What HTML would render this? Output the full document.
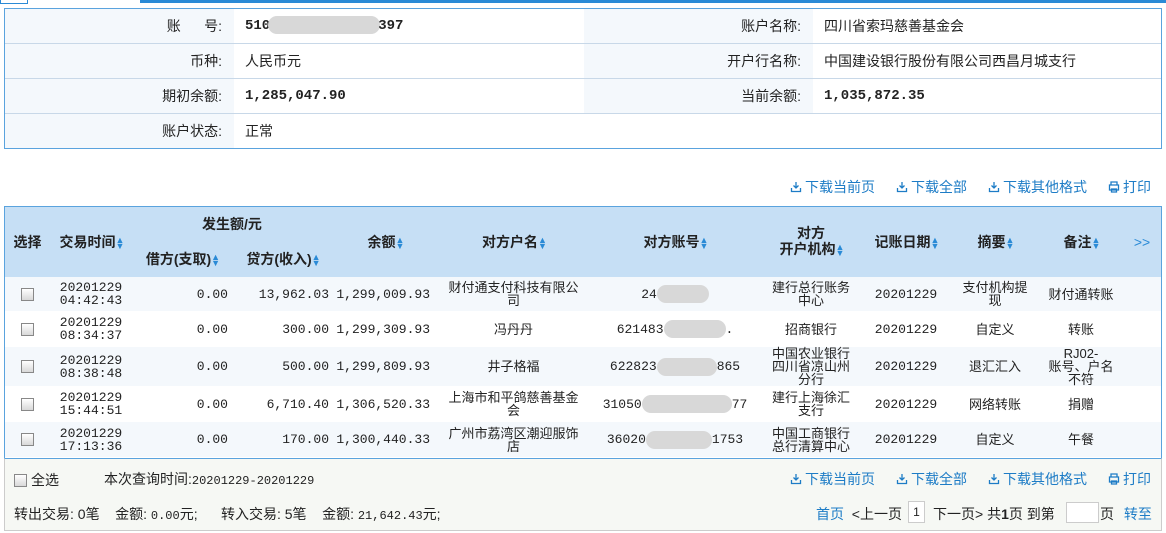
<!DOCTYPE html>
<html><head><meta charset="utf-8"><style>
*{margin:0;padding:0;box-sizing:border-box}
body{width:1166px;height:533px;background:#fff;font-family:"Liberation Sans","WenQuanYi Zen Hei","Noto Sans CJK SC",sans-serif;font-size:13px;color:#222;position:relative;overflow:hidden}
.a{position:absolute}
.num{font-family:"Liberation Mono",monospace;font-size:12px}
.nb{font-family:"Liberation Mono",monospace;font-size:13px;font-weight:bold}
.info{left:4px;top:8px;width:1158px;height:141px;border:1px solid #5aa3de}
.info .r{position:absolute;left:0;width:1156px;height:35px;border-bottom:1px solid #c8d8e8}
.lb{position:absolute;top:0;height:34px;background:#f4f8fc;text-align:right;line-height:34px;padding-right:12px;font-size:14px}
.vl{position:absolute;top:0;line-height:34px;font-size:14px}
.links{color:#1d7cc6;font-size:14px}
.links span{position:absolute;white-space:nowrap;display:flex;align-items:center}
.links svg{margin-right:3px}
.th{position:absolute;font-weight:bold;font-size:14px;text-align:center;color:#222;line-height:18px}
.ar{color:#2a8ad6;font-size:9px;display:inline-block;width:7px;line-height:6px;vertical-align:middle;text-align:center}
.row{position:absolute;left:5px;width:1156px;border-bottom:1px solid #fff}
.c{position:absolute;top:0;height:100%;display:flex;align-items:center;justify-content:center;text-align:center;line-height:13px;font-size:13px}
.rt{justify-content:flex-end}
.cb{width:13px;height:13px;border:1px solid #888;background:linear-gradient(#fff,#d8d8d8)}
.blur{display:inline-block;height:18px;background:#d8d8d8;border-radius:9px;vertical-align:middle}
</style></head><body>
<svg width="0" height="0" style="position:absolute"><defs>
<symbol id="dl" viewBox="0 0 12 12"><path d="M6 1v6M3.5 4.5L6 7l2.5-2.5M1.5 7v3.5h9V7" fill="none" stroke="#1d7cc6" stroke-width="1.3"/></symbol>
<symbol id="pr" viewBox="0 0 12 12"><path d="M3 4V1h6v3M1.5 4h9v5h-9zM3.5 8h5v3h-5z" fill="none" stroke="#1d7cc6" stroke-width="1.3"/></symbol>
</defs></svg>
<div class="a" style="left:0;top:0;width:28px;height:4px;border:1px solid #2a8ad6;border-top:none"></div>
<div class="a" style="left:140px;top:0;width:1026px;height:3px;background:#2a8ad6"></div>

<div class="a info">
 <div class="r" style="top:0"><div class="lb" style="left:0;width:229px">账&nbsp;&nbsp;&nbsp;&nbsp;&nbsp;&nbsp;号:</div><div class="vl nb" style="left:240px">510<span class="blur" style="width:112px;margin:0 -2px"></span>397</div>
  <div class="lb" style="left:579px;width:229px">账户名称:</div><div class="vl" style="left:819px">四川省索玛慈善基金会</div></div>
 <div class="r" style="top:35px"><div class="lb" style="left:0;width:229px">币种:</div><div class="vl" style="left:240px">人民币元</div>
  <div class="lb" style="left:579px;width:229px">开户行名称:</div><div class="vl" style="left:819px">中国建设银行股份有限公司西昌月城支行</div></div>
 <div class="r" style="top:70px"><div class="lb" style="left:0;width:229px">期初余额:</div><div class="vl nb" style="left:240px">1,285,047.90</div>
  <div class="lb" style="left:579px;width:229px">当前余额:</div><div class="vl nb" style="left:819px">1,035,872.35</div></div>
 <div class="r" style="top:105px;border-bottom:none"><div class="lb" style="left:0;width:229px">账户状态:</div><div class="vl" style="left:240px">正常</div></div>
</div>

<div class="a links" style="left:0;top:177px;width:1166px;height:18px">
 <span style="left:790px"><svg width="12" height="12"><use href="#dl"/></svg>下载当前页</span><span style="left:896px"><svg width="12" height="12"><use href="#dl"/></svg>下载全部</span><span style="left:988px"><svg width="12" height="12"><use href="#dl"/></svg>下载其他格式</span><span style="left:1108px"><svg width="12" height="12"><use href="#pr"/></svg>打印</span>
</div>

<div class="a" style="left:4px;top:206px;width:1158px;height:253px;border:1px solid #5aa3de;border-bottom:none"></div>
<div class="a" style="left:5px;top:207px;width:1156px;height:70px;background:#c6dff5"></div>
<div class="th" style="left:5px;top:233px;width:45px">选择</div>
<div class="th" style="left:50px;top:233px;width:82px">交易时间<span class="ar">▲<br>▼</span></div>
<div class="th" style="left:132px;top:215px;width:200px">发生额/元</div>
<div class="th" style="left:132px;top:250px;width:100px">借方(支取)<span class="ar">▲<br>▼</span></div>
<div class="th" style="left:232px;top:250px;width:101px">贷方(收入)<span class="ar">▲<br>▼</span></div>
<div class="th" style="left:333px;top:233px;width:104px">余额<span class="ar">▲<br>▼</span></div>
<div class="th" style="left:437px;top:233px;width:153px">对方户名<span class="ar">▲<br>▼</span></div>
<div class="th" style="left:590px;top:233px;width:170px">对方账号<span class="ar">▲<br>▼</span></div>
<div class="th" style="left:760px;top:225px;width:102px;line-height:16px">对方<br>开户机构<span class="ar">▲<br>▼</span></div>
<div class="th" style="left:862px;top:233px;width:88px">记账日期<span class="ar">▲<br>▼</span></div>
<div class="th" style="left:950px;top:233px;width:90px">摘要<span class="ar">▲<br>▼</span></div>
<div class="th" style="left:1040px;top:233px;width:82px">备注<span class="ar">▲<br>▼</span></div>
<div class="th" style="left:1122px;top:233px;width:40px;color:#2a8ad6;font-weight:normal">&gt;&gt;</div>

<div class="row" style="top:277px;height:35px;background:#f4f8fc">
 <div class="c" style="left:0;width:45px"><div class="cb"></div></div>
 <div class="c num" style="left:45px;width:82px">20201229<br>04:42:43</div>
 <div class="c num rt" style="left:127px;width:96px">0.00</div>
 <div class="c num rt" style="left:227px;width:97px">13,962.03</div>
 <div class="c num rt" style="left:328px;width:97px">1,299,009.93</div>
 <div class="c" style="left:432px;width:153px">财付通支付科技有限公<br>司</div>
 <div class="c num" style="left:585px;width:170px">24<span class="blur" style="width:52px"></span></div>
 <div class="c" style="left:755px;width:102px">建行总行账务<br>中心</div>
 <div class="c num" style="left:857px;width:88px">20201229</div>
 <div class="c" style="left:945px;width:90px">支付机构提<br>现</div>
 <div class="c" style="left:1035px;width:82px">财付通转账</div>
</div>
<div class="row" style="top:312px;height:35px;background:#fff">
 <div class="c" style="left:0;width:45px"><div class="cb"></div></div>
 <div class="c num" style="left:45px;width:82px">20201229<br>08:34:37</div>
 <div class="c num rt" style="left:127px;width:96px">0.00</div>
 <div class="c num rt" style="left:227px;width:97px">300.00</div>
 <div class="c num rt" style="left:328px;width:97px">1,299,309.93</div>
 <div class="c" style="left:432px;width:153px">冯丹丹</div>
 <div class="c num" style="left:585px;width:170px">621483<span class="blur" style="width:62px"></span>.</div>
 <div class="c" style="left:755px;width:102px">招商银行</div>
 <div class="c num" style="left:857px;width:88px">20201229</div>
 <div class="c" style="left:945px;width:90px">自定义</div>
 <div class="c" style="left:1035px;width:82px">转账</div>
</div>
<div class="row" style="top:347px;height:40px;background:#f4f8fc">
 <div class="c" style="left:0;width:45px"><div class="cb"></div></div>
 <div class="c num" style="left:45px;width:82px">20201229<br>08:38:48</div>
 <div class="c num rt" style="left:127px;width:96px">0.00</div>
 <div class="c num rt" style="left:227px;width:97px">500.00</div>
 <div class="c num rt" style="left:328px;width:97px">1,299,809.93</div>
 <div class="c" style="left:432px;width:153px">井子格福</div>
 <div class="c num" style="left:585px;width:170px">622823<span class="blur" style="width:60px"></span>865</div>
 <div class="c" style="left:755px;width:102px">中国农业银行<br>四川省凉山州<br>分行</div>
 <div class="c num" style="left:857px;width:88px">20201229</div>
 <div class="c" style="left:945px;width:90px">退汇汇入</div>
 <div class="c" style="left:1035px;width:82px">RJ02-<br>账号、户名<br>不符</div>
</div>
<div class="row" style="top:387px;height:35px;background:#fff">
 <div class="c" style="left:0;width:45px"><div class="cb"></div></div>
 <div class="c num" style="left:45px;width:82px">20201229<br>15:44:51</div>
 <div class="c num rt" style="left:127px;width:96px">0.00</div>
 <div class="c num rt" style="left:227px;width:97px">6,710.40</div>
 <div class="c num rt" style="left:328px;width:97px">1,306,520.33</div>
 <div class="c" style="left:432px;width:153px">上海市和平鸽慈善基金<br>会</div>
 <div class="c num" style="left:585px;width:170px">31050<span class="blur" style="width:90px"></span>77</div>
 <div class="c" style="left:755px;width:102px">建行上海徐汇<br>支行</div>
 <div class="c num" style="left:857px;width:88px">20201229</div>
 <div class="c" style="left:945px;width:90px">网络转账</div>
 <div class="c" style="left:1035px;width:82px">捐赠</div>
</div>
<div class="row" style="top:422px;height:36px;background:#f4f8fc">
 <div class="c" style="left:0;width:45px"><div class="cb"></div></div>
 <div class="c num" style="left:45px;width:82px">20201229<br>17:13:36</div>
 <div class="c num rt" style="left:127px;width:96px">0.00</div>
 <div class="c num rt" style="left:227px;width:97px">170.00</div>
 <div class="c num rt" style="left:328px;width:97px">1,300,440.33</div>
 <div class="c" style="left:432px;width:153px">广州市荔湾区潮迎服饰<br>店</div>
 <div class="c num" style="left:585px;width:170px">36020<span class="blur" style="width:66px"></span>1753</div>
 <div class="c" style="left:755px;width:102px">中国工商银行<br>总行清算中心</div>
 <div class="c num" style="left:857px;width:88px">20201229</div>
 <div class="c" style="left:945px;width:90px">自定义</div>
 <div class="c" style="left:1035px;width:82px">午餐</div>
</div>

<div class="a" style="left:4px;top:458px;width:1158px;height:73px;background:#f6f8f4;border:1px solid #ccc;border-top:1px solid #5aa3de"></div>
<div class="a" style="left:14px;top:470px;display:flex;align-items:center;font-size:14px"><div class="cb"></div><span style="margin-left:4px">全选</span></div>
<div class="a" style="left:104px;top:469px;font-size:14px">本次查询时间:<span class="num">20201229-20201229</span></div>
<div class="a links" style="left:0;top:469px;width:1166px;height:18px">
 <span style="left:790px"><svg width="12" height="12"><use href="#dl"/></svg>下载当前页</span><span style="left:896px"><svg width="12" height="12"><use href="#dl"/></svg>下载全部</span><span style="left:988px"><svg width="12" height="12"><use href="#dl"/></svg>下载其他格式</span><span style="left:1108px"><svg width="12" height="12"><use href="#pr"/></svg>打印</span>
</div>
<div class="a" style="left:14px;top:504px;white-space:nowrap;font-size:14px">转出交易: 0笔&nbsp;&nbsp;&nbsp;&nbsp;金额: <span class="num">0.00</span>元;&nbsp;&nbsp;&nbsp;&nbsp;&nbsp;&nbsp;转入交易: 5笔&nbsp;&nbsp;&nbsp;&nbsp;金额: <span class="num">21,642.43</span>元;</div>
<div class="a" style="left:816px;top:504px;white-space:nowrap;font-size:14px"><span style="color:#1d7cc6">首页</span>&nbsp;&nbsp;&lt;上一页</div>
<div class="a" style="left:908px;top:501px;width:17px;height:22px;border:1px solid #ccc;background:#fff;text-align:center;line-height:20px;font-size:12px">1</div>
<div class="a" style="left:933px;top:504px;white-space:nowrap;font-size:14px">下一页&gt; 共<b>1</b>页 到第</div>
<div class="a" style="left:1066px;top:502px;width:33px;height:21px;border:1px solid #ccc;background:#fff"></div>
<div class="a" style="left:1100px;top:504px;white-space:nowrap;font-size:14px">页 <span style="color:#1d7cc6;margin-left:6px">转至</span></div>
</body></html>
